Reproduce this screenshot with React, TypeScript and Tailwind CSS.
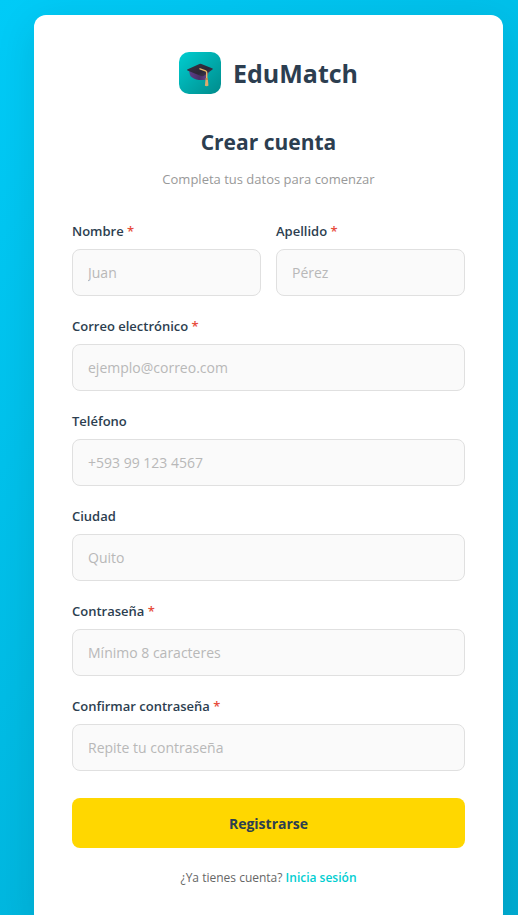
type FieldProps = {
  id: string;
  label: string;
  placeholder: string;
  type?: string;
  required?: boolean;
};

function Field({ id, label, placeholder, type = "text", required = false }: FieldProps) {
  return (
    <div className="min-w-0">
      <label htmlFor={id} className="block text-[13px] leading-5 font-semibold text-[#2c3e50]">
        {label}
        {required && <span className="text-[#e74c3c]"> *</span>}
      </label>
      <input
        id={id}
        type={type}
        required={required}
        placeholder={placeholder}
        className="mt-2 block h-[47px] w-full rounded-lg border border-[#e0e0e0] bg-[#fafafa] px-[15px] text-[14px] text-[#2c3e50] outline-none placeholder:text-[#b8b8b8] focus:border-[#00ced1]"
      />
    </div>
  );
}

function GraduationCap() {
  return (
    <svg viewBox="0 0 28 28" className="size-7" aria-hidden="true">
      <defs>
        <linearGradient id="board" x1="0" y1="0" x2="1" y2="1">
          <stop offset="0" stopColor="#3a3344" />
          <stop offset="0.6" stopColor="#2c2637" />
          <stop offset="1" stopColor="#4a4058" />
        </linearGradient>
        <linearGradient id="base" x1="0" y1="0" x2="1" y2="0">
          <stop offset="0" stopColor="#5b3f8a" />
          <stop offset="0.5" stopColor="#4a2f66" />
          <stop offset="1" stopColor="#6d4a94" />
        </linearGradient>
      </defs>
      <path d="M3.2 11.5 C3.4 15 4 17 5.8 18.2 C9 20.6 14 21.6 19.6 20.8 L23.4 12 Z" fill="url(#base)" />
      <path d="M1.2 10.4 L13.4 4.9 Q14.4 4.5 15.4 4.9 L26.6 9.6 Q27.2 10.1 26.5 10.6 L18 16.7 Q16.6 17.6 15 17 L1.5 11.5 Q.7 10.9 1.2 10.4Z" fill="url(#board)" />
      <path d="M14 9.8 L19.6 11.9 Q20.7 12.4 20.7 13.5 V20" fill="none" stroke="#e8b765" strokeWidth="1.4" strokeLinecap="round" strokeLinejoin="round" />
      <path d="M19.7 19 H21.7 L22.5 26.6 Q20.7 27.6 18.9 26.7 Z" fill="#dcab6e" />
      <path d="M19.4 20 H22" stroke="#a96f38" strokeWidth="1" />
    </svg>
  );
}

export default function App() {
  return (
    <main className="min-h-screen bg-linear-135 from-[#00cbf7] to-[#00acd2] pt-[15px] pr-[15px] pb-[15px] pl-[34px] font-['Open_Sans','Noto_Sans',sans-serif]">
      <section className="mx-auto max-w-[480px] rounded-xl bg-white px-[38px] pt-[37px] pb-[38px] shadow-[0_10px_40px_rgba(0,0,0,0.1)]">
        <header className="text-center">
          <div className="flex items-center justify-center gap-3">
            <div className="flex size-[42px] items-center justify-center rounded-[10px] bg-linear-135 from-[#00ced1] to-[#008b8b]">
              <GraduationCap />
            </div>
            <span className="text-[25px] leading-8 font-bold text-[#2c3e50]">EduMatch</span>
          </div>
          <h1 className="mt-[34px] text-[21px] leading-7 font-bold text-[#2c3e50]">Crear cuenta</h1>
          <p className="mt-[13px] text-[13px] leading-5 text-[#999999]">Completa tus datos para comenzar</p>
        </header>

        <form className="mt-8 flex flex-col gap-5" onSubmit={(e) => e.preventDefault()}>
          <div className="grid grid-cols-2 gap-[15px]">
            <Field id="nombre" label="Nombre" placeholder="Juan" required />
            <Field id="apellido" label="Apellido" placeholder="Pérez" required />
          </div>
          <Field id="correo" label="Correo electrónico" placeholder="ejemplo@correo.com" type="email" required />
          <Field id="telefono" label="Teléfono" placeholder="+593 99 123 4567" type="tel" />
          <Field id="ciudad" label="Ciudad" placeholder="Quito" />
          <Field id="contrasena" label="Contraseña" placeholder="Mínimo 8 caracteres" type="password" required />
          <Field id="confirmar" label="Confirmar contraseña" placeholder="Repite tu contraseña" type="password" required />
          <button type="submit" className="mt-[7px] h-[50px] w-full cursor-pointer rounded-lg bg-[#ffd700] text-[14px] font-bold text-[#2c3e50]">
            Registrarse
          </button>
        </form>

        <p className="mt-5 text-center text-[12px] leading-5 text-[#666666]">
          ¿Ya tienes cuenta?{" "}
          <a href="#iniciar-sesion" className="font-semibold text-[#00ced1]">
            Inicia sesión
          </a>
        </p>
      </section>
    </main>
  );
}
